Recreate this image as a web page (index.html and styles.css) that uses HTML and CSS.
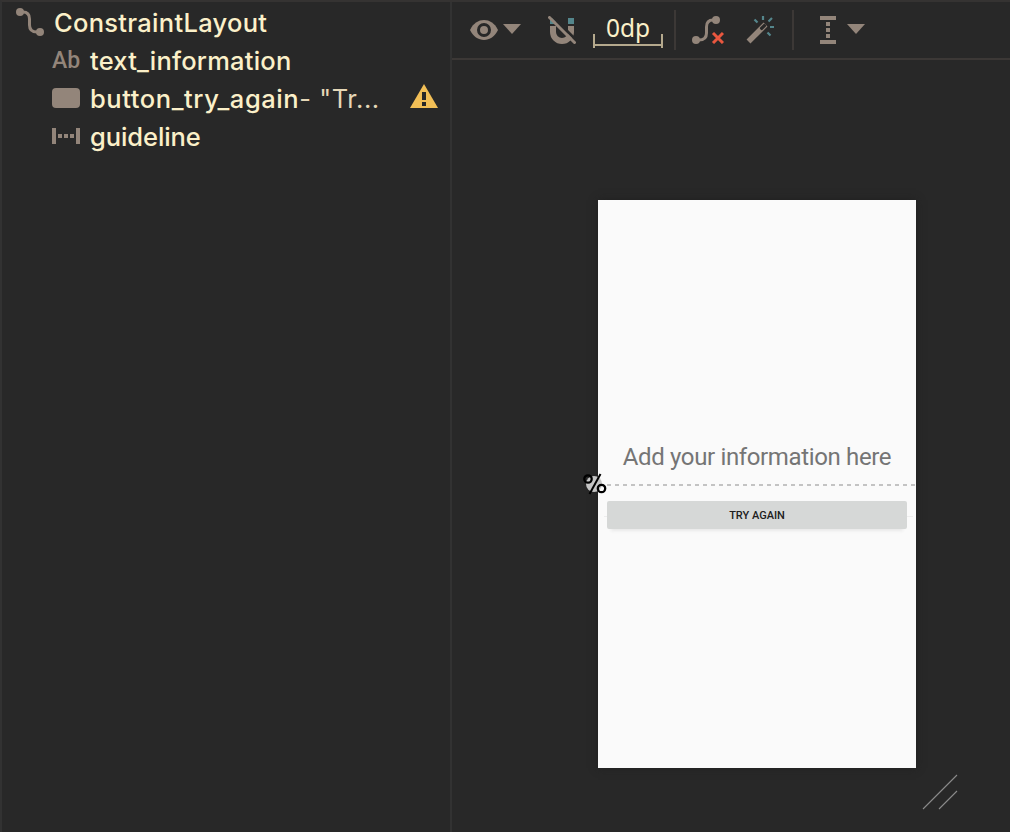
FILE: index.html
```html
<!DOCTYPE html>
<html lang="en">
<head>
<meta charset="utf-8">
<title>Layout Editor</title>
<link rel="stylesheet" href="styles.css">
</head>
<body>
<div class="editor">
  <aside class="tree">
    <div class="row root">
      <svg class="icon" width="28" height="28" viewBox="0 0 28 28"><path d="M4 4H7Q13.500 4 13.500 11V17Q13.500 24 21 24H24" fill="none" stroke="#93857a" stroke-width="3"/><circle cx="4" cy="4" r="4" fill="#93857a"/><circle cx="24" cy="24" r="4" fill="#93857a"/></svg>
      <span class="label root-label">ConstraintLayout</span>
    </div>
    <div class="row child">
      <span class="ab">Ab</span>
      <span class="label text-label">text_information</span>
    </div>
    <div class="row child">
      <span class="button-icon"></span>
      <span class="label button-label">button_try_again<span class="hint">- "Tr...</span></span>
      <svg class="warning" width="28" height="24" viewBox="0 0 28 24"><path d="M14 0L28 24H0Z" fill="#f2bf56"/><path d="M12 8h4v8h-4zM12 18h4v4h-4z" fill="#282828"/></svg>
    </div>
    <div class="row child">
      <svg class="icon" width="28" height="16" viewBox="0 0 28 16"><path d="M0 0h4v16H0zM24 0h4v16h-4zM6 6h4v4H6zM12 6h4v4h-4zM18 6h4v4h-4z" fill="#93857a"/></svg>
      <span class="label guide-label">guideline</span>
    </div>
  </aside>
  <main class="design">
    <div class="toolbar">
      <svg class="eye" width="28" height="20" viewBox="0 0 28 20"><path d="M0 10C6-3.3 22-3.3 28 10C22 23.3 6 23.3 0 10Z" fill="#93857a"/><circle cx="14" cy="10" r="5.500" fill="none" stroke="#282828" stroke-width="3"/></svg>
      <svg class="arrow first-arrow" width="18" height="10" viewBox="0 0 18 10"><path d="M0 0H18L9 10Z" fill="#93857a"/></svg>
      <svg class="magnet" width="28" height="28" viewBox="0 0 28 28"><path d="M2 10h6v6a6 6 0 0 0 12 0v-6h6v6a12 12 0 0 1-24 0z" fill="#93857a"/><path d="M2 2h6v6H2zM20 2h6v6h-6z" fill="#54868c"/><path d="M3.500-.5L29.500 25.500" stroke="#282828" stroke-width="3"/><path d="M1.500 1.500L26.500 26.500" stroke="#93857a" stroke-width="3" stroke-linecap="round"/></svg>
      <div class="margin-box"><span>0dp</span></div>
      <span class="separator sep-one"></span>
      <svg class="clear" width="32" height="28" viewBox="0 0 32 28"><path d="M4 24H7Q14.500 24 14.500 17V11Q14.500 4 21 4H24" fill="none" stroke="#93857a" stroke-width="3"/><circle cx="4" cy="24" r="4" fill="#93857a"/><circle cx="24" cy="4" r="4" fill="#93857a"/><path d="M21 17L31 27M31 17L21 27" stroke="#e9573f" stroke-width="3"/></svg>
      <svg class="wand" width="28" height="28" viewBox="0 0 28 28"><path d="M2.500 25.500L19.500 8.500" stroke="#93857a" stroke-width="5.500"/><rect x="-1.700" y="-3.500" width="3.400" height="7" rx="1.500" transform="translate(17 11) rotate(45)" fill="#282828"/><path d="M17 0v4M24 11h4M8.500 3.500l3 3M26 2l-3.500 3.500M21.500 16.500l3 3" stroke="#54868c" stroke-width="2.200"/></svg>
      <span class="separator sep-two"></span>
      <svg class="expand" width="16" height="28" viewBox="0 0 16 28"><path d="M0 0h16v4H0zM0 24h16v4H0zM6 6h4v4H6zM6 12h4v4H6zM6 18h4v4H6z" fill="#93857a"/></svg>
      <svg class="arrow" width="18" height="10" viewBox="0 0 18 10"><path d="M0 0H18L9 10Z" fill="#93857a"/></svg>
    </div>
    <div class="canvas">
      <div class="device">
        <div class="information"><span>Add your information here</span></div>
        <div class="guideline"></div>
        <svg class="percent" width="24" height="22" viewBox="0 0 24 22"><circle cx="11" cy="11" r="8" fill="#c4c4c4"/><circle cx="5" cy="6" r="3.700" fill="none" stroke="#000" stroke-width="2.300"/><circle cx="18.500" cy="15.500" r="3.700" fill="none" stroke="#000" stroke-width="2.300"/><path d="M17.500 1L6.500 21" stroke="#000" stroke-width="2"/></svg>
        <div class="button-line">
          <div class="try-again"><span>TRY AGAIN</span></div>
        </div>
      </div>
      <svg class="resize" width="36" height="36" viewBox="0 0 36 36"><path d="M1 35L35 1M17 35L35 17" stroke="#8b8b8b" stroke-width="1.100"/></svg>
    </div>
  </main>
</div>
</body>
</html>
```
FILE: styles.css
```css
* { box-sizing: border-box; }
body { margin: 0; background: #282828; font-family: Inter, sans-serif; }
svg { display: block; flex: none; }
.editor { display: flex; width: 1010px; height: 832px; overflow: hidden; border-top: 2px solid #353332; border-left: 2px solid #323232; }
.tree { width: 450px; flex: none; padding-top: 2px; border-right: 2px solid #323232; }
.row { display: flex; align-items: center; height: 38px; color: #fbf0c9; white-space: nowrap; }
.root { padding-left: 14px; gap: 10px; }
.child { padding-left: 50px; gap: 10px; }
.icon { margin-top: -2px; }
.ab { width: 28px; color: #93857a; font: 500 23px/28px Roboto, sans-serif; margin-top: -1px; }
.button-icon { width: 28px; height: 20px; flex: none; border-radius: 4px; background: #93857a; margin-top: -2px; }
.label { line-height: 38px; font-weight: 500; font-size: 25.5px; }
.root-label { letter-spacing: .29px; }
.text-label { letter-spacing: .22px; }
.button-label { width: 310px; letter-spacing: .58px; }
.guide-label { letter-spacing: -.08px; }
.hint { color: #e5d7b7; font-weight: 400; }
.warning { margin-top: -6px; }
.design { flex: 1; min-width: 0; }
.toolbar { display: flex; align-items: center; height: 58px; padding-left: 18px; border-bottom: 2px solid #3c3836; }
.first-arrow { margin-left: 5px; }
.magnet { margin-left: 27px; }
.margin-box { width: 70px; height: 14px; margin: 22px 0 0 17px; border: 2px solid #b5a98d; border-width: 0 2px; background: linear-gradient(#b5a98d, #b5a98d) 0 10px / 100% 2px no-repeat; }
.margin-box span { display: block; margin-top: -21px; color: #fbf0c9; font: 24.5px/30px "Noto Sans", sans-serif; text-align: center; }
.separator { width: 2px; height: 40px; background: #3c3836; }
.sep-one { margin-left: 11px; }
.clear { margin-left: 16px; }
.wand { margin-left: 22px; }
.sep-two { margin-left: 18px; }
.expand { margin: 0 11px 0 26px; }
.arrow { margin-top: -2px; }
.canvas { display: flex; align-items: flex-start; height: 772px; padding: 140px 0 0 146px; }
.device { position: relative; width: 318px; height: 568px; flex: none; padding-top: 240px; background: #fafafa; box-shadow: 0 0 8px #202020; }
.information { height: 44px; color: #757575; font: 24px/34px Roboto, sans-serif; letter-spacing: -.36px; text-align: center; white-space: nowrap; }
.guideline { height: 2px; margin-left: 9px; background: repeating-linear-gradient(90deg, #c3c3c3 0 4px, transparent 4px 8px); }
.percent { position: absolute; left: -15px; top: 273px; }
.button-line { margin: 15px 3px 0 6px; padding: 0 6px 0 3px; background: linear-gradient(#ededed, #ededed) 0 15px / 100% 1px no-repeat; }
.try-again { width: 300px; height: 28px; border-radius: 2px; background: #d6d8d7; color: #202020; font: 500 11px/30px Roboto, sans-serif; text-align: center; box-shadow: 0 6px 3px -4px #e9e9e9; }
.resize { margin: 574px 0 0 6px; }
```
